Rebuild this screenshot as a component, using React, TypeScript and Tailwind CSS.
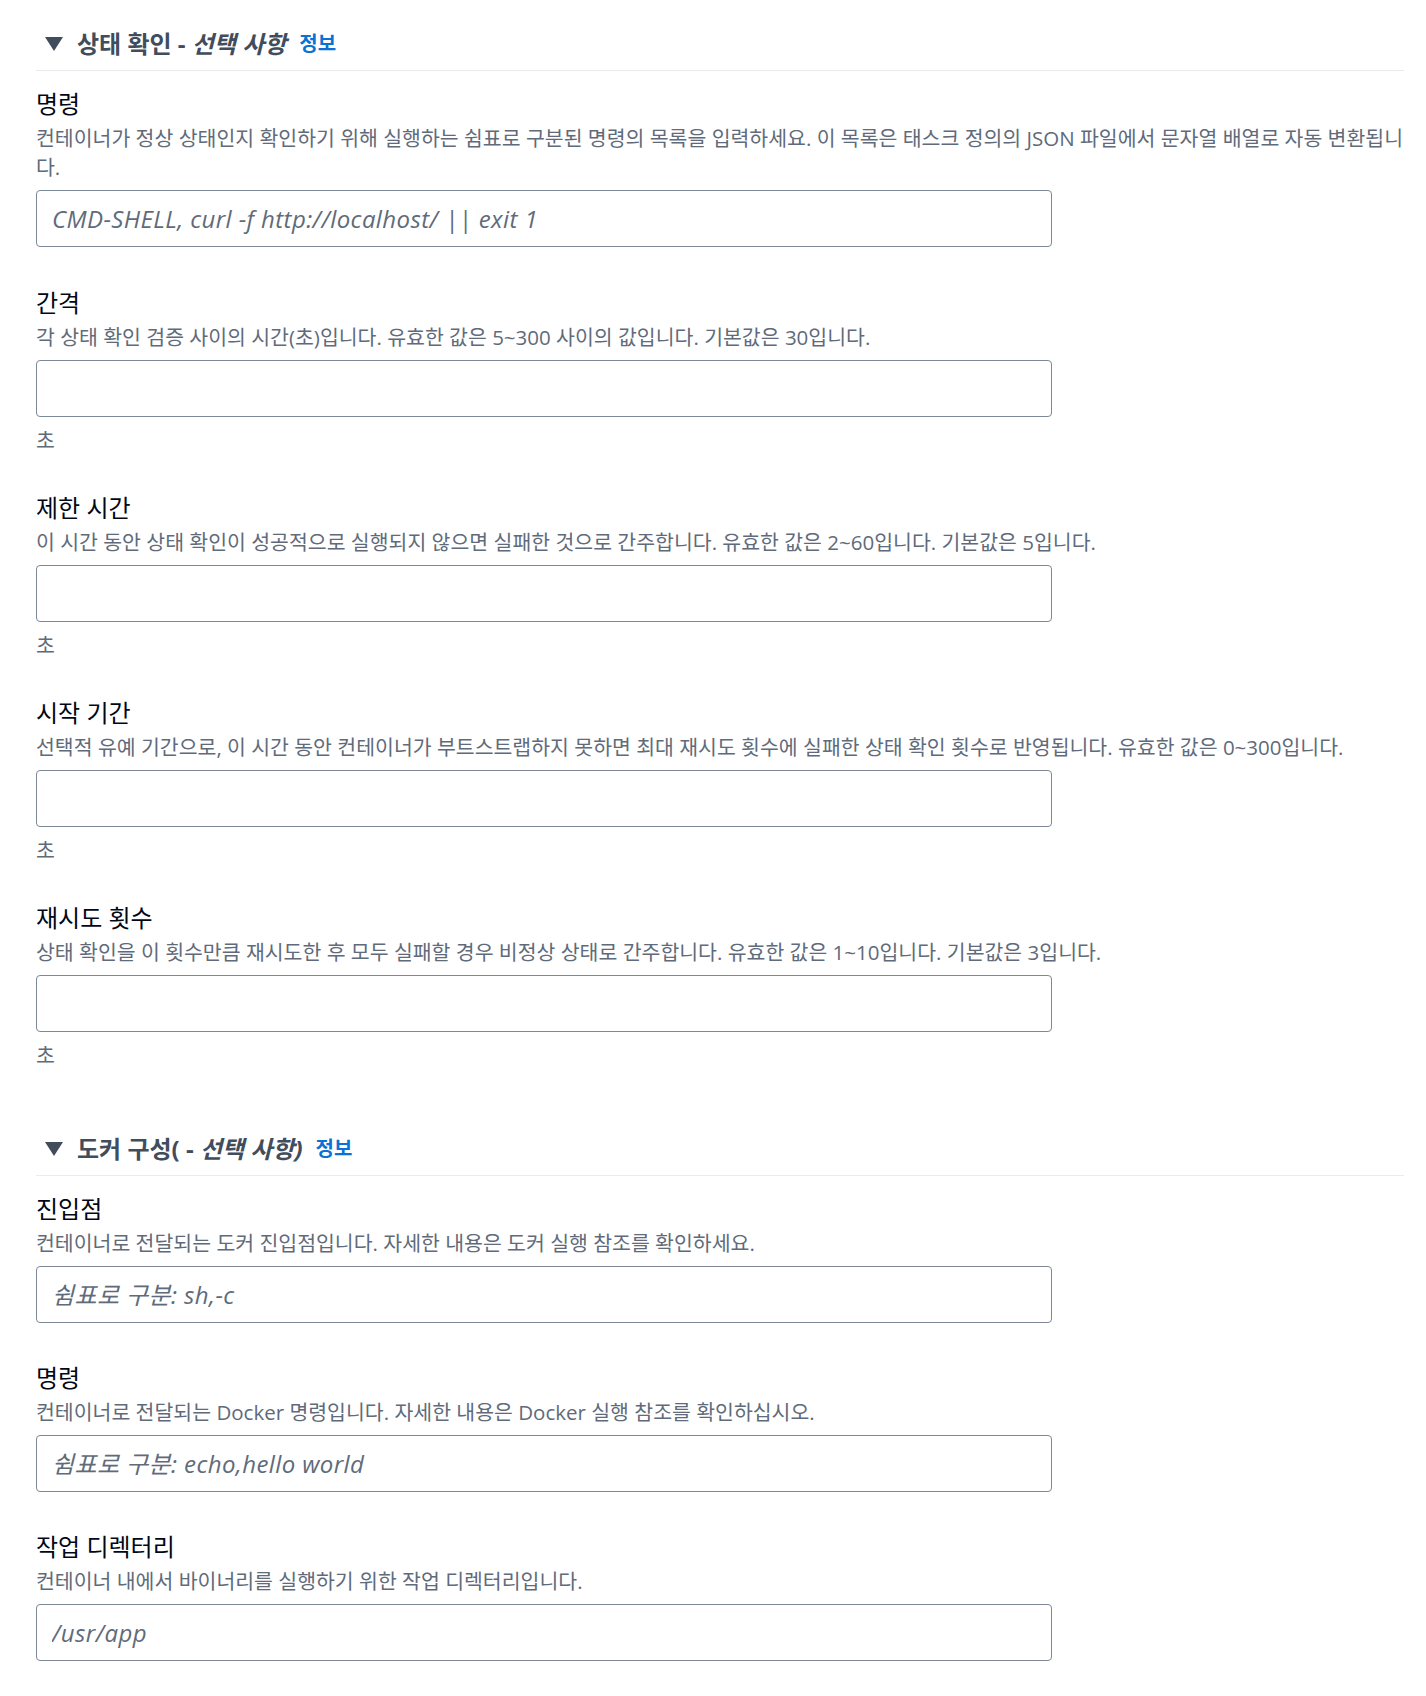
import React from "react";

type Field = {
  label: string;
  desc: string;
  placeholder?: string;
  suffix?: string;
};

const section1: Field[] = [
  {
    label: "명령",
    desc: "컨테이너가 정상 상태인지 확인하기 위해 실행하는 쉼표로 구분된 명령의 목록을 입력하세요. 이 목록은 태스크 정의의 JSON 파일에서 문자열 배열로 자동 변환됩니다.",
    placeholder: "CMD-SHELL, curl -f http://localhost/ || exit 1",
  },
  {
    label: "간격",
    desc: "각 상태 확인 검증 사이의 시간(초)입니다. 유효한 값은 5~300 사이의 값입니다. 기본값은 30입니다.",
    suffix: "초",
  },
  {
    label: "제한 시간",
    desc: "이 시간 동안 상태 확인이 성공적으로 실행되지 않으면 실패한 것으로 간주합니다. 유효한 값은 2~60입니다. 기본값은 5입니다.",
    suffix: "초",
  },
  {
    label: "시작 기간",
    desc: "선택적 유예 기간으로, 이 시간 동안 컨테이너가 부트스트랩하지 못하면 최대 재시도 횟수에 실패한 상태 확인 횟수로 반영됩니다. 유효한 값은 0~300입니다.",
    suffix: "초",
  },
  {
    label: "재시도 횟수",
    desc: "상태 확인을 이 횟수만큼 재시도한 후 모두 실패할 경우 비정상 상태로 간주합니다. 유효한 값은 1~10입니다. 기본값은 3입니다.",
    suffix: "초",
  },
];

const section2: Field[] = [
  {
    label: "진입점",
    desc: "컨테이너로 전달되는 도커 진입점입니다. 자세한 내용은 도커 실행 참조를 확인하세요.",
    placeholder: "쉼표로 구분: sh,-c",
  },
  {
    label: "명령",
    desc: "컨테이너로 전달되는 Docker 명령입니다. 자세한 내용은 Docker 실행 참조를 확인하십시오.",
    placeholder: "쉼표로 구분: echo,hello world",
  },
  {
    label: "작업 디렉터리",
    desc: "컨테이너 내에서 바이너리를 실행하기 위한 작업 디렉터리입니다.",
    placeholder: "/usr/app",
  },
];

function Caret() {
  return (
    <svg width="18" height="14" viewBox="0 0 18 14" className="shrink-0">
      <polygon points="0,0 18,0 9,14" fill="#414d5c" />
    </svg>
  );
}

function FieldBlock({ f }: { f: Field }) {
  return (
    <div className="flex flex-col">
      <div className="text-[24px] leading-[32px] text-[#000716]">{f.label}</div>
      <div className="mt-[4px] w-[1380px] text-[20.5px] leading-[29px] text-[#5f6b7a]">{f.desc}</div>
      <input
        type="text"
        placeholder={f.placeholder ?? ""}
        className="mt-[8px] h-[57px] w-[1016px] rounded-[4px] border border-[#7d8998] bg-white px-[15px] text-[24px] italic tracking-[0.4px] text-[#000716] outline-none placeholder:text-[#5f6b7a] placeholder:italic"
      />
      {f.suffix && (
        <div className="mb-[-3px] mt-[9px] text-[20.5px] leading-[29px] text-[#5f6b7a]">{f.suffix}</div>
      )}
    </div>
  );
}

function Section({
  title,
  fields,
  gap,
}: {
  title: React.ReactNode;
  fields: Field[];
  gap: string;
}) {
  return (
    <section className="flex flex-col">
      <div className="flex items-center border-b border-[#e9ebed] pb-[8px]">
        <div className="flex h-[36px] items-center pl-[9px]">
          <Caret />
          <h2 className="ml-[14px] text-[24px] font-bold leading-[36px] text-[#414d5c]">{title}</h2>
          <a className="ml-[13px] cursor-pointer text-[20px] font-bold leading-[36px] text-[#0972d3]">정보</a>
        </div>
      </div>
      <div className={`flex flex-col pt-[17px] ${gap}`}>
        {fields.map((f, i) => (
          <FieldBlock key={i} f={f} />
        ))}
      </div>
    </section>
  );
}

export default function App() {
  return (
    <div className="min-h-[1696px] overflow-hidden bg-white pl-[36px] pr-[22px] pt-[26px] pb-[36px] font-['Open_Sans','Noto_Sans_CJK_KR',sans-serif]">
      <Section
        title={
          <>
            상태 확인 - <i>선택 사항</i>
          </>
        }
        fields={section1}
        gap="gap-[40px]"
      />
      <div className="mt-[64px]">
        <Section
          title={
            <>
              도커 구성( - <i>선택 사항)</i>
            </>
          }
          fields={section2}
          gap="gap-[39px]"
        />
      </div>
    </div>
  );
}
